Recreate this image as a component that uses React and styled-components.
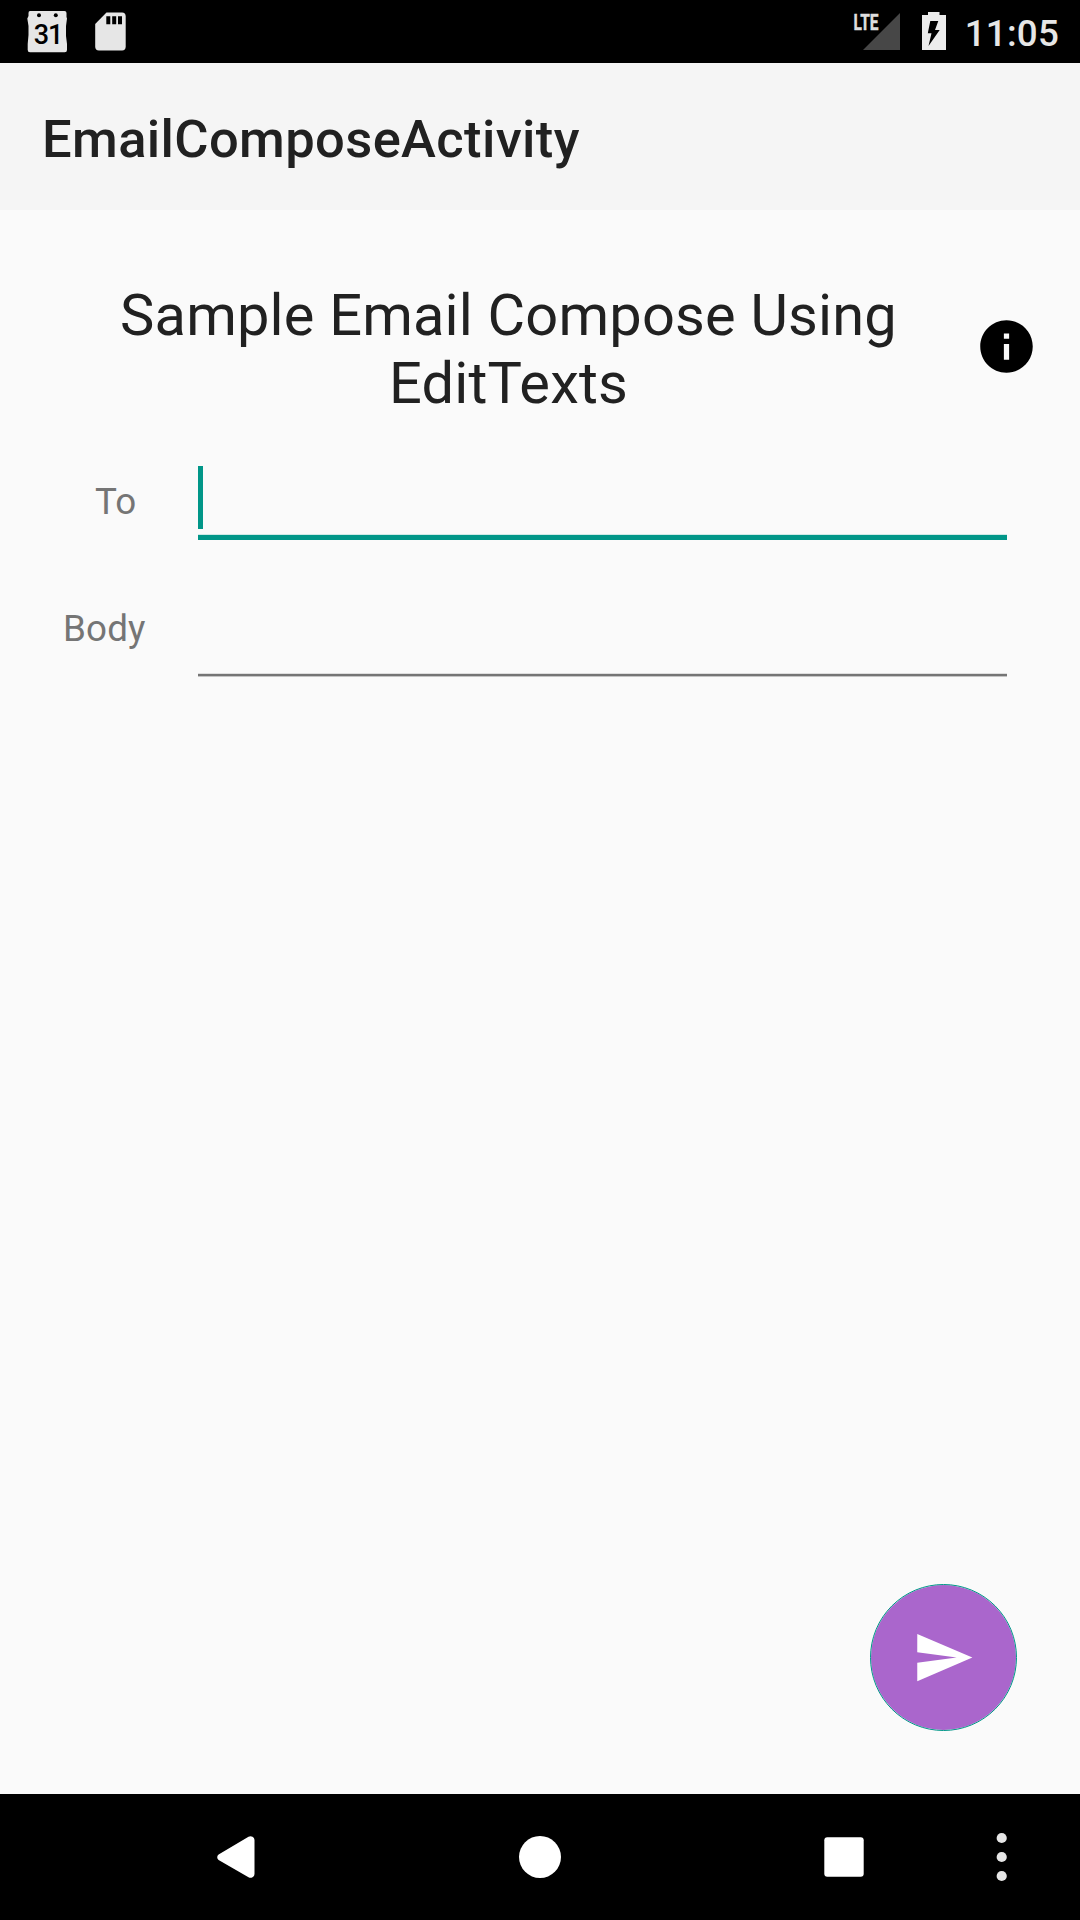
import React from "react";
import styled, { createGlobalStyle } from "styled-components";

const GlobalStyle = createGlobalStyle`
  *, *::before, *::after { box-sizing: border-box; }
  body { margin: 0; background: #fafafa; }
  svg { display: block; flex: none; }
`;

const Screen = styled.div`
  width: 1080px;
  height: 1920px;
  display: flex;
  flex-direction: column;
  overflow: hidden;
  background: #fafafa;
  color: #212121;
  font-family: Roboto, "Liberation Sans", sans-serif;
`;

const StatusBar = styled.header`
  flex: none;
  height: 63px;
  padding: 0 21px 0 27px;
  display: flex;
  justify-content: space-between;
  background: #000;
  color: #e6e6e6;
`;

const StatusGroup = styled.div`
  display: flex;
  height: 63px;
`;

const Clock = styled.time`
  margin-left: 19px;
  font-size: 36.75px;
  font-weight: 500;
  letter-spacing: 0.2px;
  line-height: 67px;
  white-space: nowrap;
`;

const AppBar = styled.div`
  flex: none;
  height: 147px;
  padding: 5px 42px 0;
  display: flex;
  align-items: center;
  background: #f5f5f5;
`;

const AppTitle = styled.h1`
  margin: 0;
  font-size: 52.5px;
  font-weight: 500;
  letter-spacing: 0.37px;
  line-height: 62px;
`;

const Content = styled.main`
  flex: 1;
  display: flex;
  flex-direction: column;
  padding: 71px 42px 63px;
`;

const HeadingRow = styled.div`
  display: flex;
  align-items: flex-start;
`;

const Heading = styled.h2`
  flex: 1;
  margin: 0;
  font-size: 57.75px;
  font-weight: 400;
  letter-spacing: 0.19px;
  line-height: 68px;
  text-align: center;
`;

const InfoButton = styled.button`
  margin: 34px 0 0;
  padding: 0;
  border: 0;
  background: none;
`;

const FieldRow = styled.label`
  display: flex;
  align-items: flex-start;
  margin-top: ${(p) => p.$gap}px;
`;

const FieldLabel = styled.span`
  width: 156px;
  padding-left: ${(p) => p.$indent}px;
  font-size: 36.75px;
  letter-spacing: 0.15px;
  line-height: ${(p) => p.$line}px;
  color: #757575;
`;

const Field = styled.div`
  width: 809px;
  height: ${(p) => (p.$focused ? 74 : 83)}px;
  display: flex;
  flex-direction: column;
  justify-content: space-between;
`;

const Caret = styled.span`
  width: 5px;
  height: 63px;
  background: ${(p) => (p.$focused ? "#009688" : "transparent")};
`;

const Underline = styled.span`
  height: ${(p) => (p.$focused ? 6 : 4)}px;
  background: ${(p) =>
    p.$focused
      ? "linear-gradient(#cfe9e6 1px, #009688 1px)"
      : "linear-gradient(#dedede 1px, #757575 1px, #757575 3px, #c4c4c4 3px)"};
`;

const SendButton = styled.button`
  width: 147px;
  height: 147px;
  margin: auto 21px 0 auto;
  padding: 0;
  display: grid;
  place-items: center;
  border: 1px solid #009688;
  border-radius: 50%;
  background: #aa66cc;
  background-clip: padding-box;
`;

const NavBar = styled.nav`
  flex: none;
  height: 126px;
  padding-left: 84px;
  display: grid;
  grid-template-columns: repeat(3, 304px) 84px;
  background: #000;
`;

const NavButton = styled.button`
  padding: 0;
  border: 0;
  background: none;
  display: flex;
  align-items: center;
  justify-content: ${(p) => (p.$start ? "flex-start" : "center")};
`;

const CalendarIcon = () => (
  <svg width="41" height="63" viewBox="0 0 41 63">
    <path
      d="M3 11H37.500Q39.500 11 39.500 13V17L40 18.500L39 26V36L40 44V50Q40 52.300 37.700 52.300H3Q.700 52.300 .700 50V44L1.500 35V26L.300 18.500L1.500 16V13Q1.500 11 3 11Z"
      fill="#e6e6e6"
    />
    <circle cx="12" cy="15.300" r="2" fill="#000" />
    <circle cx="28.800" cy="15.300" r="2" fill="#000" />
    <text
      x="6.800" y="43.800" fontFamily="Roboto, sans-serif"
      fontSize="27" fontWeight="500" letterSpacing="-1.200" fill="#000"
    >
      31
    </text>
  </svg>
);

const SdCardIcon = () => (
  <svg width="58" height="63" viewBox="0 0 58 63">
    <path
      d="M38.500 12.500H54Q57.700 12.500 57.700 16.500V46.500Q57.700 50.500 54 50.500H31Q27.200 50.500 27.200 46.500V24Z"
      fill="#e6e6e6"
    />
    <path d="M38.300 16.300h4v8h-4zM44.200 16.300h4v8h-4zM50 16.300h4v8h-4z" fill="#000" />
  </svg>
);

const SignalIcon = () => (
  <svg width="48" height="63" viewBox="0 0 48 63">
    <path d="M47 13V50H10Z" fill="#474747" />
    <text
      x="0.500" y="29.700" fontFamily="Roboto, sans-serif" fontSize="22.500"
      fontWeight="700" textLength="25" lengthAdjust="spacingAndGlyphs"
      fill="#dedede" stroke="#dedede" strokeWidth="0.500"
    >
      LTE
    </text>
  </svg>
);

const BatteryIcon = () => (
  <svg width="45" height="63" viewBox="0 0 45 63">
    <path d="M27 12H38.500V15H45V50H21V15H27Z" fill="#ececec" />
    <path d="M29.300 21H37.300L34 30H38.700L27.500 46L30.500 33.200H26.800Z" fill="#000" />
  </svg>
);

const InfoIcon = () => (
  <svg width="63" height="63" viewBox="0 0 24 24">
    <path
      d="M12 2C6.480 2 2 6.480 2 12s4.480 10 10 10 10-4.480 10-10S17.520 2 12 2zm1 15h-2v-6h2v6zm0-8h-2V7h2v2z"
      fill="#000"
    />
  </svg>
);

const SendIcon = () => (
  <svg width="63" height="63" viewBox="0 0 24 24">
    <path d="M2.010 21L23 12 2.010 3 2 10l15 2-15 2z" fill="#fff" />
  </svg>
);

const BackIcon = () => (
  <svg width="38" height="42" viewBox="0 0 38 42">
    <path
      d="M1.600 18.600L31.500 .700Q33.500 -.400 35.500 .700Q37.500 1.700 37.500 4V38Q37.500 40.300 35.500 41.300Q33.500 42.400 31.500 41.300L1.600 23.900Q.200 22.900 .200 21.200Q.200 19.600 1.600 18.600Z"
      fill="#fff"
    />
  </svg>
);

const HomeIcon = () => (
  <svg width="42" height="42" viewBox="0 0 42 42">
    <circle cx="21" cy="21" r="21" fill="#fff" />
  </svg>
);

const RecentsIcon = () => (
  <svg width="40" height="40" viewBox="0 0 40 40">
    <rect x=".3" y=".3" width="39.400" height="39.400" rx="3" fill="#fff" />
  </svg>
);

const MoreIcon = () => (
  <svg width="12" height="50" viewBox="0 0 12 50">
    {[6, 25, 44].map((y) => (
      <circle key={y} cx="5.700" cy={y} r="5.100" fill="#e6e6e6" />
    ))}
  </svg>
);

export default function App() {
  return (
    <Screen>
      <GlobalStyle />
      <StatusBar>
        <StatusGroup>
          <CalendarIcon />
          <SdCardIcon />
        </StatusGroup>
        <StatusGroup>
          <SignalIcon />
          <BatteryIcon />
          <Clock>11:05</Clock>
        </StatusGroup>
      </StatusBar>
      <AppBar>
        <AppTitle>EmailComposeActivity</AppTitle>
      </AppBar>
      <Content>
        <HeadingRow>
          <Heading>Sample Email Compose Using EditTexts</Heading>
          <InfoButton aria-label="Info"><InfoIcon /></InfoButton>
        </HeadingRow>
        <FieldRow $gap={49}>
          <FieldLabel $indent={53} $line={71}>To</FieldLabel>
          <Field $focused>
            <Caret $focused />
            <Underline $focused />
          </Field>
        </FieldRow>
        <FieldRow $gap={54}>
          <FieldLabel $indent={21} $line={69}>Body</FieldLabel>
          <Field>
            <Caret />
            <Underline />
          </Field>
        </FieldRow>
        <SendButton aria-label="Send"><SendIcon /></SendButton>
      </Content>
      <NavBar>
        <NavButton aria-label="Back"><BackIcon /></NavButton>
        <NavButton aria-label="Home"><HomeIcon /></NavButton>
        <NavButton aria-label="Recents"><RecentsIcon /></NavButton>
        <NavButton aria-label="More" $start><MoreIcon /></NavButton>
      </NavBar>
    </Screen>
  );
}
